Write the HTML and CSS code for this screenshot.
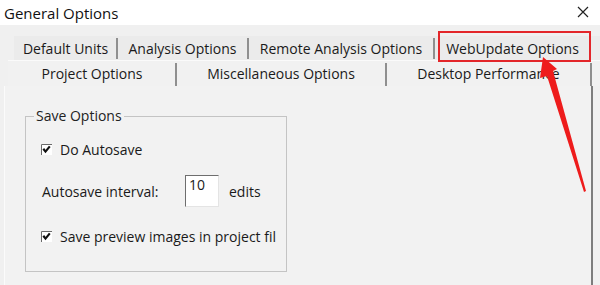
FILE: index.html
```html
<!DOCTYPE html>
<html lang="en">
<head>
  <meta charset="UTF-8" />
  <meta name="viewport" content="width=device-width, initial-scale=1.0"/>
  <link rel="stylesheet" href="styles.css">
  <title>General Options</title>
</head>
<body>
  <div class="dialog">
    <div class="titlebar">
      <span class="title">General Options</span>
      <svg class="close" width="12" height="12" viewBox="0 0 12 12">
        <path d="M1 1 L11 11 M11 1 L1 11" stroke="#222" stroke-width="1.2" fill="none"/>
      </svg>
    </div>

    <div class="content">
      <div class="tab-row back">
        <div class="tab">Default Units</div>
        <div class="tab">Analysis Options</div>
        <div class="tab">Remote Analysis Options</div>
        <div class="tab">WebUpdate Options</div>
      </div>
      <div class="tab-row front">
        <div class="tab">Project Options</div>
        <div class="tab">Miscellaneous Options</div>
        <div class="tab">Desktop Performance</div>
      </div>

      <div class="panel">
        <fieldset class="group">
          <legend>Save Options</legend>
          <div class="group-body">
            <label class="check-row">
              <svg class="check" width="11" height="11" viewBox="0 0 11 11">
                <rect x="0" y="0" width="11" height="11" fill="#fff"/>
                <path d="M0.5 11 V0.5 H11" stroke="#6a6a6a" fill="none"/>
                <path d="M2.3 4.8 L4.5 7.6 L8.8 2.4" stroke="#111" stroke-width="2.2" fill="none"/>
              </svg>
              <span>Do Autosave</span>
            </label>
            <div class="interval-row">
              <span class="interval-label">Autosave interval:</span>
              <span class="field">10</span>
              <span class="unit">edits</span>
            </div>
            <label class="check-row last">
              <svg class="check" width="11" height="11" viewBox="0 0 11 11">
                <rect x="0" y="0" width="11" height="11" fill="#fff"/>
                <path d="M0.5 11 V0.5 H11" stroke="#6a6a6a" fill="none"/>
                <path d="M2.3 4.8 L4.5 7.6 L8.8 2.4" stroke="#111" stroke-width="2.2" fill="none"/>
              </svg>
              <span>Save preview images in project fil</span>
            </label>
          </div>
        </fieldset>
      </div>
    </div>

    <!-- red annotation drawn over the dialog -->
    <svg class="annotation" width="600" height="285" viewBox="0 0 600 285">
      <rect x="439" y="32" width="151" height="29" fill="none" stroke="#e3262a" stroke-width="2"/>
      <polygon points="543,57 557,69 553,71 586,191 584,192 547,76 540,78" fill="#ee1c1c"/>
    </svg>
  </div>
</body>
</html>
```

FILE: styles.css
```css
body {
  margin: 0;
  background-color: #f0f0f0;
  font-family: "Open Sans", "Noto Sans", sans-serif;
  font-size: 14px;
  color: #1a1a1a;
}

.dialog {
  position: relative;
  width: 600px;
  height: 285px;
  overflow: hidden;
  background-color: #f0f0f0;
}

.titlebar {
  height: 25px;
  background: #ffffff;
  display: flex;
  align-items: center;
  justify-content: space-between;
  padding: 0 11px 0 4px;
}

.title {
  font-size: 15px;
  color: #111;
}

.close {
  margin-top: -2px;
}

.content {
  padding-top: 11px;
}

.tab-row {
  display: flex;
}

.tab {
  display: flex;
  align-items: center;
  justify-content: center;
  position: relative;
  white-space: nowrap;
}

.tab::after {
  content: "";
  position: absolute;
  right: -1px;
  width: 2px;
  background: #8f8f8f;
}

.back {
  margin-left: 14px;
  height: 24px;
  background: #ebebeb;
}

.back .tab {
  padding-top: 1px;
}

.back .tab::after {
  top: 2px;
  bottom: 1px;
}

.back .tab:nth-child(1) { width: 103px; }
.back .tab:nth-child(2) { width: 131px; }
.back .tab:nth-child(3) { width: 186px; }
.back .tab:nth-child(4) { width: 157px; }
.back .tab:nth-child(4)::after { display: none; }

.front {
  margin-left: 8px;
  height: 26px;
  border-top: 1px solid #fafafa;
  box-sizing: border-box;
  background: #f1f1f1;
}

.front .tab::after {
  top: 2px;
  bottom: 0;
}

.front .tab:nth-child(1) { width: 168px; }
.front .tab:nth-child(2) { width: 210px; }
.front .tab:nth-child(3) { width: 205px; }

.panel {
  margin-left: 4px;
  width: 589px;
  height: 199px;
  padding-top: 22px;
  box-sizing: border-box;
  border-left: 1px solid #fbfbfb;
  border-right: 2px solid #7d7d7d;
  background: #f2f2f2;
}

.group {
  margin: 0 0 0 20px;
  width: 262px;
  height: 164px;
  box-sizing: border-box;
  padding: 0 0 0 8px;
  border: 1px solid #c4c4c4;
}

.group legend {
  padding: 0 2px;
  line-height: 16px;
  color: #222;
}

.group-body {
  padding: 17px 0 0 7px;
}

.check-row {
  display: flex;
  align-items: center;
  height: 16px;
  gap: 8px;
}

.interval-row {
  display: flex;
  align-items: center;
  margin-top: 18px;
  padding-left: 1px;
}

.interval-label {
  width: 143px;
}

.field {
  width: 34px;
  height: 32px;
  box-sizing: border-box;
  background: #fff;
  border-top: 1px solid #6e6e6e;
  border-left: 1px solid #6e6e6e;
  border-right: 1px solid #e4e4e4;
  border-bottom: 1px solid #e4e4e4;
  padding: 1px 0 0 3px;
  line-height: 16px;
}

.unit {
  margin-left: 10px;
}

.check-row.last {
  margin-top: 21px;
}

.annotation {
  position: absolute;
  left: 0;
  top: 0;
  pointer-events: none;
}
```
